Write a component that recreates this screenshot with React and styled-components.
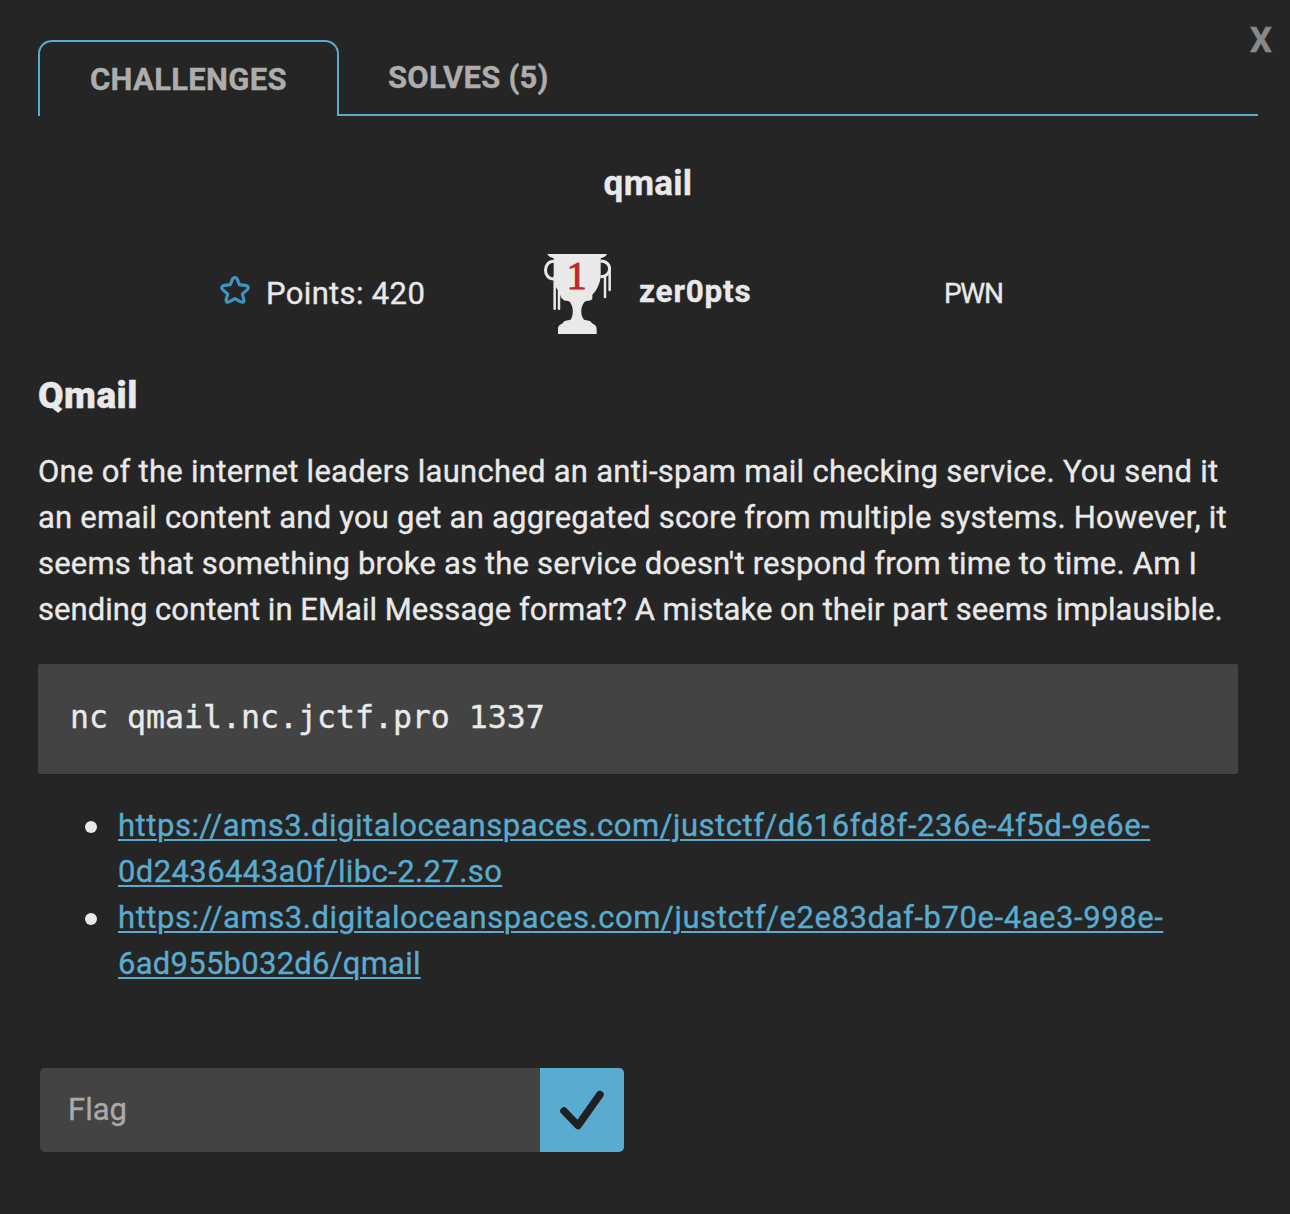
import React from "react";
import styled, { createGlobalStyle } from "styled-components";

const Global = createGlobalStyle`
  * { box-sizing: border-box; }
  body { margin: 0; background: #252525; }
`;

const Modal = styled.main`
  position: relative;
  width: 1290px;
  height: 1214px;
  padding: 40px 32px 0 38px;
  background: #252525;
  color: #e9e9e9;
  font: 400 31px/46px Roboto, "Liberation Sans", sans-serif;
  -webkit-text-stroke: 0.35px;
`;

const Text = styled.span`
  white-space: nowrap;
  letter-spacing: ${(p) => p.$track || 0}px;
`;

const Close = styled.button`
  position: absolute;
  top: 21px;
  right: 18px;
  padding: 0;
  border: 0;
  background: none;
  color: #888;
  font: 700 35px/40px Roboto, sans-serif;
`;

const Tabs = styled.nav`
  display: flex;
  height: 76px;
`;

const Tab = styled.div`
  flex: ${(p) => (p.$active ? "0 0 301px" : "1")};
  padding: ${(p) => (p.$active ? "15px 0 0 50px" : "15px 0 0 49px")};
  border: 2px solid #59abd0;
  border-width: ${(p) => (p.$active ? "2px 2px 0" : "0 0 2px")};
  border-radius: ${(p) => (p.$active ? "14px 14px 0 0" : "0")};
  color: #adadad;
  font-weight: 700;
  line-height: 46px;
`;

const Title = styled.h1`
  margin: 45px 0 0;
  text-align: center;
  font-size: 35px;
  font-weight: 700;
  line-height: 46px;
`;

const Facts = styled.section`
  display: flex;
  align-items: center;
  height: 80px;
  margin-top: 47px;
`;

const Points = styled.div`
  display: flex;
  align-items: center;
  width: 324px;
  margin-left: 182px;
  gap: 16px;

  svg { margin-bottom: 8px; }
`;

const Winner = styled.div`
  display: flex;
  align-items: center;
  width: 400px;
  gap: 28px;
  font-size: 31.5px;
  font-weight: 700;

  ${Text} { margin-bottom: 4px; }
`;

const Category = styled.div`
  font-size: 28px;
`;

const Heading = styled.h2`
  margin: 39px 0 0;
  font-size: 37px;
  font-weight: 900;
  line-height: 46px;
`;

const Description = styled.div`
  display: flex;
  flex-direction: column;
  margin: 30px 0 0;
`;

const Code = styled.pre`
  width: 1200px;
  margin: 31px 0 0;
  padding: 30px 32px 34px;
  border-radius: 2px;
  background: #434343;
  font: 31.56px/46px "DejaVu Sans Mono", monospace;
`;

const Files = styled.ul`
  margin: 29px 0 0;
  padding: 0;
  list-style: none;
`;

const File = styled.li`
  display: flex;
  gap: 21px;
  padding-left: 47px;

  &::before {
    content: "";
    flex: none;
    width: 12px;
    height: 12px;
    margin-top: 18px;
    border-radius: 50%;
    background: #e9e9e9;
  }
`;

const Link = styled.a`
  display: flex;
  flex-direction: column;
  align-items: flex-start;
  color: #59abd0;

  ${Text} {
    text-decoration: underline;
    text-decoration-thickness: 2px;
    text-underline-offset: 3px;
  }
`;

const FlagForm = styled.form`
  display: flex;
  width: 584px;
  height: 84px;
  margin: 81px 0 0 2px;
  overflow: hidden;
  border-radius: 5px;
`;

const FlagInput = styled.input`
  flex: 1;
  min-width: 0;
  padding: 0 28px;
  border: 0;
  background: #434343;
  font: inherit;

  &::placeholder { color: #a9a9a9; opacity: 1; }
`;

const Submit = styled.button`
  width: 84px;
  padding: 0;
  border: 0;
  background: #59abd0;

  svg { display: block; }
`;

const Star = () => (
  <svg width="30" height="28" viewBox="0 0 90 84">
    <path
      d="M38 8 Q45 1 51 8 L58 26 L80 29 Q88 33 82 41 L67 54 L72 73 Q71 82 61 77 L45 68 L28 77 Q18 82 18 73 L23 54 L8 41 Q2 33 10 29 L31 26 Z"
      fill="none" stroke="#3f94bf" strokeWidth="9.5" strokeLinejoin="round"
    />
  </svg>
);

const Trophy = () => (
  <svg width="67" height="80" viewBox="42 42 201 240">
    <g fill="none" stroke="#e9e9e9">
      <path d="M72 64 C38 64 38 117 72 117" strokeWidth="9" />
      <path d="M211 63 C248 63 248 110 211 110" strokeWidth="9" />
      <path d="M74 110V206 M87 153V206" strokeWidth="7.5" strokeLinecap="round" />
      <path d="M225 108V171 M239 88V150" strokeWidth="7.5" strokeLinecap="round" />
    </g>
    <path
      fill="#e9e9e9"
      d="M52 42H231C228 49 222 52 212 55V104C212 130 199 152 187 164V177C181 184 172 181 164 185C151 199 151 225 162 239C173 242 181 240 186 250C193 254 200 257 200 266V282H84V266C84 257 91 254 98 250C103 240 111 242 122 239C131 225 131 199 119 185C111 181 102 184 97 176C91 172 92 166 86 153C76 142 71 130 71 104V55C62 52 55 49 52 42Z"
    />
    <text x="140" y="148" textAnchor="middle" fontFamily="Liberation Serif, serif" fontSize="121" fontWeight="400" fill="#bd2830" stroke="#bd2830" strokeWidth="3">1</text>
  </svg>
);

const Check = () => (
  <svg width="84" height="84" viewBox="0 0 84 84">
    <path d="M24 43L38 57.5L60 26.5" fill="none" stroke="#202020" strokeWidth="7.5" strokeLinecap="round" strokeLinejoin="round" />
  </svg>
);

const description = [
  ["One of the internet leaders launched an anti-spam mail checking service. You send it", 0.27],
  ["an email content and you get an aggregated score from multiple systems. However, it", 0.22],
  ["seems that something broke as the service doesn't respond from time to time. Am I", 0.19],
  ["sending content in EMail Message format? A mistake on their part seems implausible.", 0.03],
];

const files = [
  [["https://ams3.digitaloceanspaces.com/justctf/d616fd8f-236e-4f5d-9e6e-", 0.53], ["0d2436443a0f/libc-2.27.so", 0.4]],
  [["https://ams3.digitaloceanspaces.com/justctf/e2e83daf-b70e-4ae3-998e-", 0.57], ["6ad955b032d6/qmail", 0.26]],
];

const Lines = ({ lines }) =>
  lines.map(([text, track]) => (
    <div key={text}><Text $track={track}>{text}</Text></div>
  ));

export default function App() {
  return (
    <Modal>
      <Global />
      <Close aria-label="Close">X</Close>
      <Tabs>
        <Tab $active><Text $track={0.3}>CHALLENGES</Text></Tab>
        <Tab><Text $track={0.25}>SOLVES (5)</Text></Tab>
      </Tabs>
      <Title><Text $track={0.3}>qmail</Text></Title>
      <Facts>
        <Points><Star /><Text $track={0.35}>Points: 420</Text></Points>
        <Winner><Trophy /><Text $track={0.8}>zer0pts</Text></Winner>
        <Category><Text $track={-1.3}>PWN</Text></Category>
      </Facts>
      <Heading><Text $track={0.5}>Qmail</Text></Heading>
      <Description><Lines lines={description} /></Description>
      <Code>nc qmail.nc.jctf.pro 1337</Code>
      <Files>
        {files.map((lines) => (
          <File key={lines[0][0]}><Link><Lines lines={lines} /></Link></File>
        ))}
      </Files>
      <FlagForm>
        <FlagInput placeholder="Flag" />
        <Submit type="button" aria-label="Submit"><Check /></Submit>
      </FlagForm>
    </Modal>
  );
}
